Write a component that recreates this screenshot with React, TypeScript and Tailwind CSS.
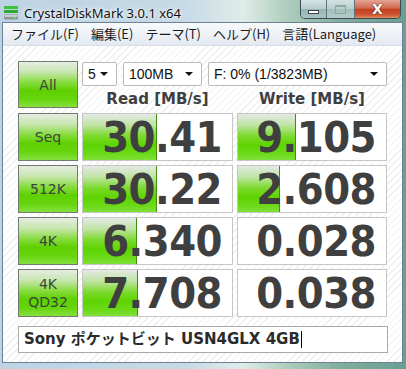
import React from 'react';

type Row = { label: string[]; read: string; readFill: number; write: string; writeFill: number };

const rows: Row[] = [
  { label: ['Seq'], read: '30.41', readFill: 74, write: '9.105', writeFill: 58 },
  { label: ['512K'], read: '30.22', readFill: 74, write: '2.608', writeFill: 42 },
  { label: ['4K'], read: '6.340', readFill: 54, write: '0.028', writeFill: 0 },
  { label: ['4K', 'QD32'], read: '7.708', readFill: 55, write: '0.038', writeFill: 0 },
];

const menus = ['ファイル(F)', '編集(E)', 'テーマ(T)', 'ヘルプ(H)', '言語(Language)'];

const BenchButton: React.FC<{ lines: string[] }> = ({ lines }) => (
  <div className="flex flex-col items-center justify-center border border-[#6f7b6f] bg-[linear-gradient(180deg,#e6ede2_0%,#c8e6b0_22%,#88dc40_45%,#5ed000_64%,#68d610_84%,#86e040_100%)] font-['DejaVu_Sans',sans-serif] text-[14px] leading-[18px] text-[#3a463a]">
    {lines.map(l => <span key={l}>{l}</span>)}
  </div>
);

const ResultCell: React.FC<{ value: string; fill: number }> = ({ value, fill }) => (
  <div className="relative flex items-center justify-end overflow-hidden border border-[#c6c6c6] bg-white pr-[10px]">
    {fill > 0 && (
      <div
        className="absolute bottom-0 left-0 top-0 border-r border-[#3d8f12] bg-[linear-gradient(180deg,#e4eae4_0%,#bfe4a4_24%,#7cda2c_48%,#5ed400_68%,#6ada18_86%,#80e038_100%)]"
        style={{ width: fill }}
      />
    )}
    <span className="relative font-['DejaVu_Sans_Condensed','DejaVu_Sans',sans-serif] text-[43px] font-bold leading-none tracking-[-0.5px] text-[#3f3f3f] [font-stretch:condensed]">
      {value}
    </span>
  </div>
);

const Select: React.FC<{ value: string; className: string }> = ({ value, className }) => (
  <div className={`flex h-[24px] items-center justify-between rounded-[2px] border border-[#bababa] bg-white pl-[5px] pr-[8px] font-['Liberation_Sans',sans-serif] text-[14px] text-[#111] ${className}`}>
    <span>{value}</span>
    <svg width="8" height="4" viewBox="0 0 8 4"><path d="M0 0h8L4 4z" fill="#111" /></svg>
  </div>
);

export default function App() {
  return (
    <div className="relative flex h-[369px] w-[406px] flex-col overflow-hidden bg-[linear-gradient(90deg,#bdd3e3_0%,#c6d9e6_45%,#dfece8_60%,#b0cfbf_70%,#80ad9c_84%,#6a9e94_100%)]">
      {/* title bar */}
      <div className="flex h-[22px] shrink-0 items-start justify-between">
        <div className="flex items-center pl-[3px] pt-[6px]">
          <svg width="16" height="14" viewBox="0 0 16 14">
            <rect x="1" y="0" width="14" height="3" fill="#3cc23c" />
            <rect x="1" y="4" width="14" height="3" fill="#2fa92f" />
            <rect x="1" y="8.5" width="14" height="5" rx="1" fill="#8c9696" />
            <rect x="1.5" y="9" width="13" height="2" fill="#c4cccc" />
            <rect x="11" y="11" width="2" height="1.5" fill="#5fe05f" />
          </svg>
          <span className="ml-[5px] font-['Noto_Sans',sans-serif] text-[13px] leading-none text-[#111] [text-shadow:0_0_6px_#ffffff,0_0_3px_#ffffff]">
            CrystalDiskMark 3.0.1 x64
          </span>
        </div>
        <div className="mr-[5px] flex h-[19px] overflow-hidden rounded-b-[5px] border border-t-0 border-[#3c4c56]">
          <div className="flex w-[26px] items-end justify-center border-r border-[#5f7278] bg-[linear-gradient(180deg,#d6e4e4_0%,#b7cccc_50%,#98b4b4_52%,#a8c4c2_100%)] pb-[4px]">
            <div className="h-[4px] w-[11px] border border-[#3a4548] bg-white" />
          </div>
          <div className="flex w-[28px] items-center justify-center border-r border-[#5f7278] bg-[linear-gradient(180deg,#d2e2e0_0%,#b9cfcc_50%,#a3bfbb_52%,#b4ccc8_100%)]">
            <div className="h-[9px] w-[11px] border border-[#8ea6a4] border-t-2" />
          </div>
          <div className="flex w-[45px] items-center justify-center bg-[linear-gradient(180deg,#e6a494_0%,#d06a50_45%,#c2401f_52%,#cc5430_80%,#e08a5c_100%)]">
            <span className="font-['DejaVu_Sans',sans-serif] text-[14px] font-bold leading-none text-white [text-shadow:0_0_1px_#3a1a10,0_0_1px_#3a1a10]">X</span>
          </div>
        </div>
      </div>

      {/* window body */}
      <div className="mb-[6px] ml-[2px] mr-[3px] flex flex-1 flex-col border border-[#6d8196]">
        <div className="flex h-[23px] shrink-0 items-center border-b border-[#d9dfe7] bg-[linear-gradient(180deg,#f8fafc_0%,#eef2f7_50%,#e3e9f1_100%)] pl-[2px] font-['Noto_Sans_CJK_JP',sans-serif] text-[13px] text-[#1b1b1b]">
          {menus.map(m => (
            <span key={m} className="px-[6px]">{m}</span>
          ))}
        </div>

        <div className="flex flex-1 flex-col bg-[repeating-linear-gradient(135deg,#ffffff_0px,#ffffff_4px,#efefef_4px,#efefef_5px)] pl-[15px] pt-[15px]">
          <div className="grid grid-cols-[60px_151px_150px] grid-rows-[48px_48px_48px_48px_48px] gap-x-[4px] gap-y-[4px]">
            <div className="flex h-[47px] flex-col [&>div]:flex-1">
              <BenchButton lines={['All']} />
            </div>
            <div className="col-span-2 flex flex-col pt-px">
              <div className="flex gap-[6px]">
                <Select value="5" className="w-[35px]" />
                <Select value="100MB" className="w-[79px]" />
                <Select value="F: 0% (1/3823MB)" className="w-[179px]" />
              </div>
              <div className="grid flex-1 grid-cols-[151px_150px] items-center gap-x-[4px] pt-[2px] text-center font-['DejaVu_Sans',sans-serif] text-[15px] font-bold text-[#3f3f3f]">
                <span>Read [MB/s]</span>
                <span>Write [MB/s]</span>
              </div>
            </div>
            {rows.map(r => (
              <React.Fragment key={r.label.join('')}>
                <BenchButton lines={r.label} />
                <ResultCell value={r.read} fill={r.readFill} />
                <ResultCell value={r.write} fill={r.writeFill} />
              </React.Fragment>
            ))}
          </div>

          <div className="mt-[9px] flex h-[27px] w-[370px] items-center border border-[#a9a9a9] bg-white pl-[5px] font-['DejaVu_Sans','Noto_Sans_CJK_JP',sans-serif] text-[15px] font-bold text-[#2b2b2b]">
            <span>Sony ポケットビット USN4GLX 4GB</span>
            <span className="ml-px h-[17px] w-px bg-black" />
          </div>
        </div>
      </div>
    </div>
  );
}
